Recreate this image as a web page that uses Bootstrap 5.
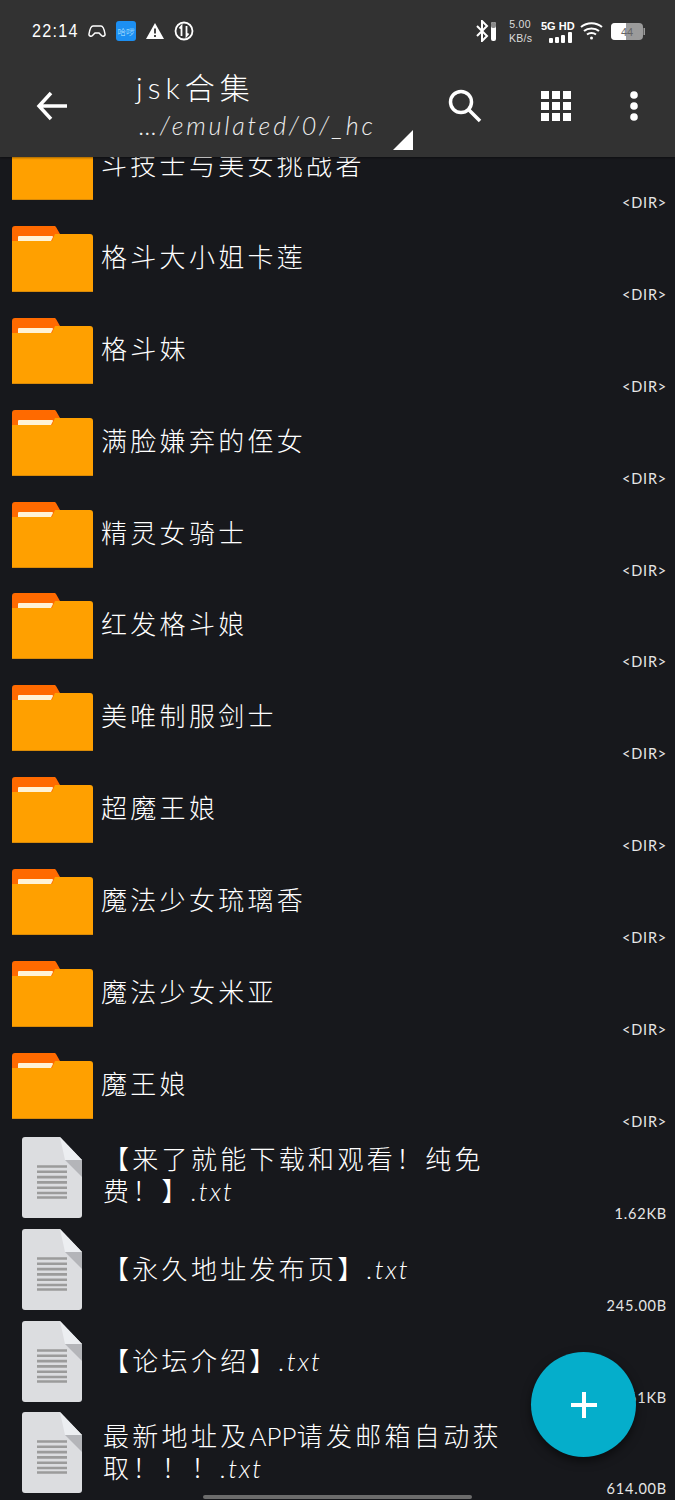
<!DOCTYPE html>
<html lang="en">
<head>
<meta charset="UTF-8">
<title>jsk合集</title>
<meta name="viewport" content="width=device-width, initial-scale=1">
<link href="https://cdn.jsdelivr.net/npm/bootstrap@5.3.3/dist/css/bootstrap.min.css" rel="stylesheet">
<style>
    body { background: #17181c; color: #fff; font-family: "Lato", "Noto Sans CJK SC", sans-serif; font-weight: 300; }
    .screen { width: 675px; height: 1500px; overflow: hidden; position: relative; }
    .app-head { background: #323232; height: 157px; position: relative; z-index: 2; box-shadow: 0 1px 2px #0006; }
    .status-row { height: 60px; padding: 2px 30px 0 32px; }
    .clock { font: 400 19px "Liberation Sans", sans-serif; letter-spacing: 1.5px; width: 48px; transform: scaleX(.85); transform-origin: left; }
    .ico-gap { margin-left: 10px; }
    .bt-ico { margin-right: 13px; }
    .speed { font: 400 10.5px/14px "Liberation Sans", sans-serif; letter-spacing: .3px; color: #ddd; text-align: center; width: 22px; margin-right: 10px; white-space: nowrap; }
    .net-box { width: 32px; margin-right: 7px; }
    .net-label { font: 700 11px/12px "Liberation Sans", sans-serif; white-space: nowrap; }
    .tool-row { height: 97px; padding: 0 37px 6px 36px; }
    .title-box { margin-left: 68px; width: 290px; }
    .title-main { font-size: 30px; line-height: 40px; letter-spacing: 5px; margin-top: -4px; }
    .title-path { font-size: 25px; line-height: 32px; letter-spacing: 2.8px; font-style: italic; color: #eee; white-space: nowrap; padding-left: 3px; margin-top: 2px; }
    .tool-gap { gap: 59px; }
    .corner { position: absolute; left: 393px; top: 130px; }
    .file-list { margin-top: -37px; }
    .file-row { height: 91.9px; position: relative; }
    .folder-ico { margin: 14px 0 0 12px; flex: none; }
    .doc-ico { margin: 6px 0 0 22px; flex: none; }
    .folder-name, .doc-name { font-size: 26px; letter-spacing: 3.3px; line-height: 32px; white-space: nowrap; margin-left: 8px; }
    .folder-name { padding-top: 29px; }
    .doc-name { margin-left: 21px; padding-top: 12px; }
    .doc-one { padding-top: 30px; }
    .doc-low { padding-top: 14px; }
    .ext { font-style: italic; letter-spacing: 2px; }
    .tight { letter-spacing: 0; }
    .size-label { position: absolute; right: 8px; top: 74px; font-size: 14.5px; font-weight: 400; line-height: 18px; letter-spacing: .8px; color: #e6e6e6; }
    .fab { position: absolute; left: 531px; top: 1352px; width: 105px; height: 105px; background: #05aecb; box-shadow: 0 4px 10px #0008; z-index: 3; }
    .home-bar { position: absolute; left: 203px; top: 1495px; width: 269px; height: 4px; background: #6c6c6c; border-radius: 2px; }
</style>
</head>
<body>
<svg width="0" height="0" class="d-block">
    <symbol id="folder" viewBox="0 0 81 66">
        <path d="M0 3a3 3 0 0 1 3-3h38a3 3 0 0 1 3 1l4 7v10H0z" fill="#ff6a00"/>
        <path d="M7 10h33a1 1 0 0 1 1 1l-2 4H6v-4a1 1 0 0 1 1-1z" fill="#fff3d6"/>
        <path d="M0 15h40l3-7h35a3 3 0 0 1 3 3v55H0z" fill="#ffa000"/>
        <rect y="65" width="81" height="1" fill="#d98a08"/>
    </symbol>
    <symbol id="doc" viewBox="0 0 60 81">
        <path d="M3 0h35l22 23v55a3 3 0 0 1-3 3H3a3 3 0 0 1-3-3V3a3 3 0 0 1 3-3z" fill="#dcdde0"/>
        <path d="M38 0l22 23H43z" fill="#eceef1"/>
        <path d="M43 23h17v17z" fill="#b4b5b9"/>
        <path d="M15 29.500h30M15 34.800h30M15 40.100h30M15 45.400h30M15 50.700h30M15 56h30M15 60.500h30" stroke="#9b9b9b" stroke-width="2.600"/>
    </symbol>
</svg>

<div class="screen">
    <div class="app-head">
        <div class="status-row d-flex align-items-center">
            <div class="clock">22:14</div>
            <svg class="ms-2" width="18" height="14" viewBox="0 0 18 14" fill="none" stroke="#fff" stroke-width="1.500"><path d="M5 2h8c2 0 3 2 4 8 .3 2-2 3-3.500 1.500L11 9H7l-2.500 2.500C3 13 .7 12 1 10c1-6 2-8 4-8z"/></svg>
            <svg class="ico-gap" width="20" height="20" viewBox="0 0 20 20"><rect width="20" height="20" rx="3" fill="#1c8ff2"/><text x="10" y="13.500" font-size="8.500" text-anchor="middle" fill="#bfe6ff" font-family="Noto Sans CJK SC">哈啰</text></svg>
            <svg class="ico-gap" width="18" height="16" viewBox="0 0 18 16"><path d="M9 0l9 16H0z" fill="#fff"/><path d="M9 5.500v5M9 12v2" stroke="#323232" stroke-width="1.800"/></svg>
            <svg class="ico-gap" width="20" height="20" viewBox="0 0 20 20" fill="none" stroke="#fff"><circle cx="10" cy="10" r="8.500" stroke-width="1.800"/><path d="M7.500 15V5L5.500 7.500M12.500 5v10l2-2.500" stroke-width="1.800"/></svg>
            <div class="ms-auto d-flex align-items-center">
                <svg class="bt-ico" width="20" height="22" viewBox="0 0 20 22" fill="none"><path d="M1 6l10 10-5 5V1l5 5L1 16" stroke="#fff" stroke-width="2"/><rect x="15" width="5" height="19" rx="2" y="2" fill="#fff"/><rect x="15" width="5" height="6" rx="2" y="2" fill="#8a8a8a"/></svg>
                <div class="speed">5.00<br>KB/s</div>
                <div class="net-box text-end">
                    <div class="net-label">5G HD</div>
                    <svg class="d-block ms-auto" width="24" height="11" viewBox="0 0 24 11" fill="#fff"><rect y="6" x="0" width="4" height="5" rx="1"/><rect x="6" y="5" width="4" height="6" rx="1"/><rect x="12" y="3" width="4" height="8" rx="1"/><rect x="19" y="0" width="4" height="11" rx="1"/></svg>
                </div>
                <svg width="23" height="18" viewBox="0 0 23 18" fill="none" stroke="#fff" stroke-width="2"><path d="M1 5c6-5 15-5 21 0M4 9c4-3.500 11-3.500 15 0M7 12.500c2.500-2 6.500-2 9 0"/><circle cx="11.500" cy="16" r="1.500" fill="#fff" stroke="none"/></svg>
                <svg class="ms-2" width="34" height="17" viewBox="0 0 34 17"><rect width="32" height="17" rx="4" fill="#9b9b9b"/><path d="M4 0h11v17H4a4 4 0 0 1-4-4V4a4 4 0 0 1 4-4z" fill="#fff"/><rect x="32.500" y="5" width="1.500" height="7" fill="#9b9b9b"/><text x="16" y="13" font-size="11" text-anchor="middle" fill="#666" font-family="Liberation Sans">44</text></svg>
            </div>
        </div>
        <div class="tool-row d-flex align-items-center">
            <svg width="32" height="30" viewBox="0 0 32 30" fill="none" stroke="#fff" stroke-width="3.500"><path d="M31 15H3M15 2L3 15l12 13"/></svg>
            <div class="title-box">
                <div class="title-main">jsk合集</div>
                <div class="title-path">…/emulated/0/_hc</div>
            </div>
            <div class="ms-auto d-flex align-items-center tool-gap">
                <svg width="34" height="34" viewBox="0 0 34 34" fill="none" stroke="#fff" stroke-width="3.500"><circle cx="13" cy="13" r="10.500"/><path d="M20.500 20.500L32 32"/></svg>
                <svg width="30" height="30" viewBox="0 0 30 30" fill="#fff"><path d="M0 0h8v8H0zM11 0h8v8h-8zM22 0h8v8h-8zM0 11h8v8H0zM11 11h8v8h-8zM22 11h8v8h-8zM0 22h8v8H0zM11 22h8v8h-8zM22 22h8v8h-8z"/></svg>
                <svg width="8" height="30" viewBox="0 0 8 30" fill="#fff"><circle cx="4" cy="4" r="3.800"/><circle cx="4" cy="15" r="3.800"/><circle cx="4" cy="26" r="3.800"/></svg>
            </div>
        </div>
        <svg class="corner" width="20" height="20" viewBox="0 0 20 20"><path d="M20 0v20H0z" fill="#fff"/></svg>
    </div>

    <div class="file-list">
        <div class="file-row d-flex"><svg class="folder-ico" width="81" height="66"><use href="#folder"/></svg><div class="folder-name">斗技士与美女挑战者</div><div class="size-label">&lt;DIR&gt;</div></div>
        <div class="file-row d-flex"><svg class="folder-ico" width="81" height="66"><use href="#folder"/></svg><div class="folder-name">格斗大小姐卡莲</div><div class="size-label">&lt;DIR&gt;</div></div>
        <div class="file-row d-flex"><svg class="folder-ico" width="81" height="66"><use href="#folder"/></svg><div class="folder-name">格斗妹</div><div class="size-label">&lt;DIR&gt;</div></div>
        <div class="file-row d-flex"><svg class="folder-ico" width="81" height="66"><use href="#folder"/></svg><div class="folder-name">满脸嫌弃的侄女</div><div class="size-label">&lt;DIR&gt;</div></div>
        <div class="file-row d-flex"><svg class="folder-ico" width="81" height="66"><use href="#folder"/></svg><div class="folder-name">精灵女骑士</div><div class="size-label">&lt;DIR&gt;</div></div>
        <div class="file-row d-flex"><svg class="folder-ico" width="81" height="66"><use href="#folder"/></svg><div class="folder-name">红发格斗娘</div><div class="size-label">&lt;DIR&gt;</div></div>
        <div class="file-row d-flex"><svg class="folder-ico" width="81" height="66"><use href="#folder"/></svg><div class="folder-name">美唯制服剑士</div><div class="size-label">&lt;DIR&gt;</div></div>
        <div class="file-row d-flex"><svg class="folder-ico" width="81" height="66"><use href="#folder"/></svg><div class="folder-name">超魔王娘</div><div class="size-label">&lt;DIR&gt;</div></div>
        <div class="file-row d-flex"><svg class="folder-ico" width="81" height="66"><use href="#folder"/></svg><div class="folder-name">魔法少女琉璃香</div><div class="size-label">&lt;DIR&gt;</div></div>
        <div class="file-row d-flex"><svg class="folder-ico" width="81" height="66"><use href="#folder"/></svg><div class="folder-name">魔法少女米亚</div><div class="size-label">&lt;DIR&gt;</div></div>
        <div class="file-row d-flex"><svg class="folder-ico" width="81" height="66"><use href="#folder"/></svg><div class="folder-name">魔王娘</div><div class="size-label">&lt;DIR&gt;</div></div>
        <div class="file-row d-flex"><svg class="doc-ico" width="60" height="81"><use href="#doc"/></svg><div class="doc-name">【来了就能下载和观看！纯免<br>费！】<span class="ext">.txt</span></div><div class="size-label">1.62KB</div></div>
        <div class="file-row d-flex"><svg class="doc-ico" width="60" height="81"><use href="#doc"/></svg><div class="doc-name doc-one">【永久地址发布页】<span class="ext">.txt</span></div><div class="size-label">245.00B</div></div>
        <div class="file-row d-flex"><svg class="doc-ico" width="60" height="81"><use href="#doc"/></svg><div class="doc-name doc-one">【论坛介绍】<span class="ext">.txt</span></div><div class="size-label">3.61KB</div></div>
        <div class="file-row d-flex"><svg class="doc-ico" width="60" height="81"><use href="#doc"/></svg><div class="doc-name doc-low">最新地址及<span class="tight">APP</span>请发邮箱自动获<br>取！！！<span class="ext">.txt</span></div><div class="size-label">614.00B</div></div>
    </div>

    <button class="fab btn rounded-circle p-0 border-0 d-flex align-items-center justify-content-center">
        <svg width="26" height="26" viewBox="0 0 26 26"><path d="M13 0v26M0 13h26" stroke="#fff" stroke-width="4"/></svg>
    </button>
    <div class="home-bar"></div>
</div>
<script src="https://cdn.jsdelivr.net/npm/bootstrap@5.3.3/dist/js/bootstrap.bundle.min.js"></script>
</body>
</html>
